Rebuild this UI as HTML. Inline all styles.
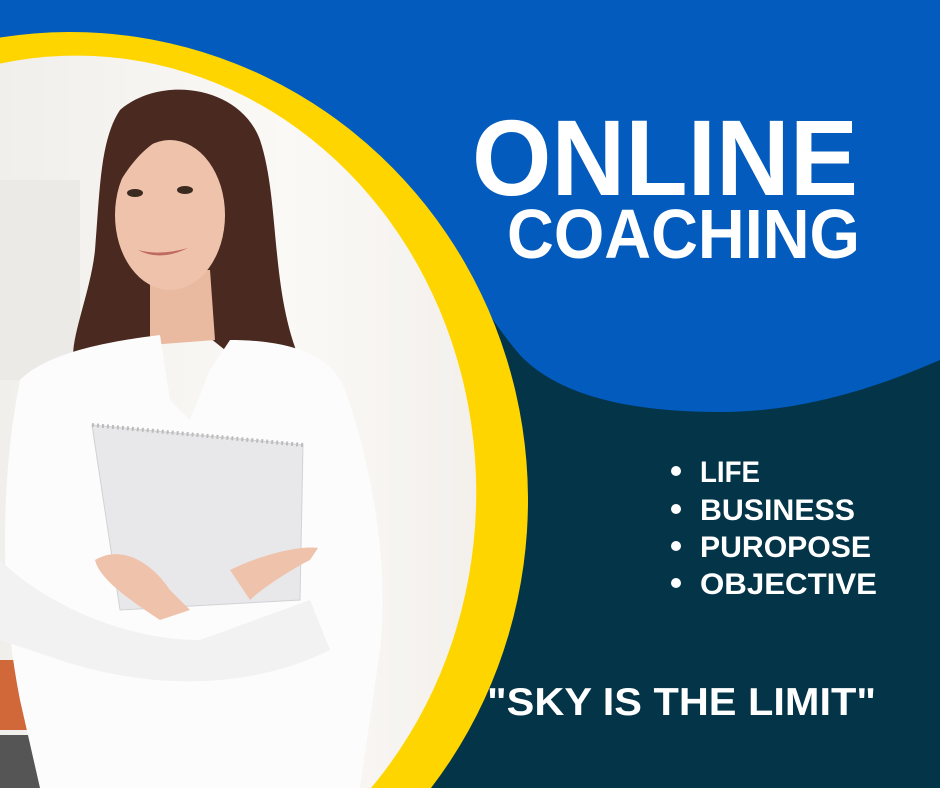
<!DOCTYPE html>
<html><head><meta charset="utf-8"><style>html,body{margin:0;padding:0;background:#033447;width:940px;height:788px;overflow:hidden}svg{display:block}</style></head>
<body>
<svg width="940" height="788" viewBox="0 0 940 788" xmlns="http://www.w3.org/2000/svg">
<defs>
<clipPath id="c"><path d="M0,63.6 A400,437 0 0,1 371,788 L0,788 Z"/></clipPath>
<linearGradient id="bg" x1="0" y1="0" x2="1" y2="0"><stop offset="0" stop-color="#f1efeb"/><stop offset="0.6" stop-color="#fbf9f6"/><stop offset="1" stop-color="#f3f0ec"/></linearGradient>
</defs>
<rect width="940" height="788" fill="#033447"/>
<path d="M0,0 H940 V360 C860,395 790,412 720,412 C620,412 555,392 520,355 C490,320 460,270 420,200 L0,200 Z" fill="#025BBD"/>
<path d="M0,37.5 A458,468 0 0,1 431,788 L0,788 Z" fill="#FFD500"/>
<g clip-path="url(#c)">
<rect x="0" y="0" width="480" height="788" fill="url(#bg)"/>
<rect x="0" y="180" width="80" height="200" fill="#eceae6"/>
<rect x="0" y="660" width="60" height="70" fill="#d0683a"/>
<rect x="0" y="735" width="50" height="53" fill="#555"/>
<path d="M120,110 C160,75 240,85 260,140 C280,200 270,290 300,360 L250,370 L200,330 L140,340 L80,370 C60,360 90,300 95,250 C100,190 100,140 120,110Z" fill="#4a2a20"/>
<path d="M150,270 L210,270 L215,340 L150,345Z" fill="#e9b9a0"/>
<ellipse cx="170" cy="215" rx="55" ry="75" fill="#efc3ab"/>
<path d="M110,180 C115,120 200,100 245,160 C235,135 200,125 180,130 C150,140 130,160 110,200Z" fill="#4a2a20"/>
<path d="M138,250 Q160,262 188,248 Q160,256 138,250Z" fill="#c06a64"/>
<ellipse cx="135" cy="193" rx="8" ry="4" fill="#3a2a20"/><ellipse cx="185" cy="190" rx="8" ry="4" fill="#3a2a20"/>
<path d="M20,380 C50,350 120,340 160,335 L170,400 L190,420 L210,370 L230,340 C280,340 330,350 345,390 C370,460 390,560 380,650 L360,788 L40,788 L20,700 C0,600 0,480 20,380Z" fill="#fcfcfc"/>
<path d="M0,560 C40,600 120,640 200,640 L310,600 L330,650 C250,690 150,690 60,660 L0,640Z" fill="#f2f2f2"/>
<path d="M92,425 L303,445 L300,600 L120,610Z" fill="#e8e8ea" stroke="#d2d2d6"/>
<line x1="92" y1="425" x2="303" y2="445" stroke="#bbb" stroke-width="4" stroke-dasharray="2 3"/>
<path d="M95,560 C120,545 150,560 170,590 L190,610 L160,620 C130,600 100,580 95,560Z" fill="#efc3ab"/>
<path d="M230,570 C260,555 300,545 318,548 L310,560 C290,570 260,590 250,600Z" fill="#efc3ab"/>
</g>
<g fill="#fff" font-family="'Liberation Sans',Arial,sans-serif" font-weight="bold">
<text x="472" y="195" font-size="108" textLength="386" lengthAdjust="spacingAndGlyphs">ONLINE</text>
<text x="507" y="258" font-size="70" textLength="353" lengthAdjust="spacingAndGlyphs">COACHING</text>
<g font-size="30">
<text x="700" y="482" textLength="60" lengthAdjust="spacingAndGlyphs">LIFE</text>
<text x="700" y="520" textLength="155" lengthAdjust="spacingAndGlyphs">BUSINESS</text>
<text x="700" y="557" textLength="171" lengthAdjust="spacingAndGlyphs">PUROPOSE</text>
<text x="700" y="594" textLength="177" lengthAdjust="spacingAndGlyphs">OBJECTIVE</text>
</g>
<circle cx="676" cy="471" r="5"/><circle cx="676" cy="509" r="5"/><circle cx="676" cy="546" r="5"/><circle cx="676" cy="583" r="5"/>
<text x="487" y="715" font-size="39" textLength="389" lengthAdjust="spacingAndGlyphs">"SKY IS THE LIMIT"</text>
</g>
</svg>
</body></html>
